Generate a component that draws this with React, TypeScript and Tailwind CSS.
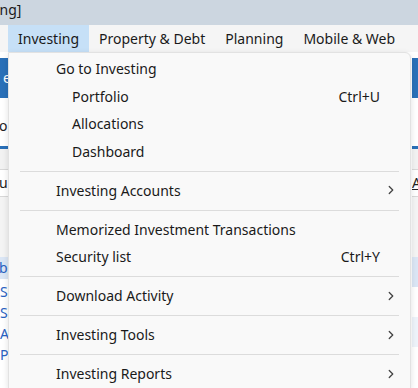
import { ChevronRight } from 'lucide-react'

type Entry =
  | { kind: 'item'; label: string; indent?: boolean; shortcut?: string; sub?: boolean }
  | { kind: 'sep' }

const MENU: Entry[] = [
  { kind: 'item', label: 'Go to Investing' },
  { kind: 'item', label: 'Portfolio', indent: true, shortcut: 'Ctrl+U' },
  { kind: 'item', label: 'Allocations', indent: true },
  { kind: 'item', label: 'Dashboard', indent: true },
  { kind: 'sep' },
  { kind: 'item', label: 'Investing Accounts', sub: true },
  { kind: 'sep' },
  { kind: 'item', label: 'Memorized Investment Transactions' },
  { kind: 'item', label: 'Security list', shortcut: 'Ctrl+Y' },
  { kind: 'sep' },
  { kind: 'item', label: 'Download Activity', sub: true },
  { kind: 'sep' },
  { kind: 'item', label: 'Investing Tools', sub: true },
  { kind: 'sep' },
  { kind: 'item', label: 'Investing Reports', sub: true },
]

const TOP_MENUS = ['Investing', 'Property & Debt', 'Planning', 'Mobile & Web']

function LeftStrip() {
  return (
    <div className="flex w-[8px] flex-col text-[14px] leading-none">
      <div className="h-[6px] bg-white" />
      <div className="flex h-[40px] items-center justify-end overflow-hidden bg-[#2a70b8] text-white">
        <span className="-mr-[3px]">e</span>
      </div>
      <div className="h-[8px] bg-white" />
      <div className="flex h-[40px] items-center overflow-hidden bg-white text-[#222]">
        <span className="-ml-[1px]">o</span>
      </div>
      <div className="h-[3px] bg-[#2a70b8]" />
      <div className="h-[20px] bg-[#f2f2f2]" />
      <div className="flex h-[28px] items-center overflow-hidden border-y border-[#d8d8d8] bg-white text-[#222]">
        <span className="-ml-[1px]">u</span>
      </div>
      <div className="h-[60px] bg-[#f4f4f4]" />
      <div className="flex h-[22px] items-center overflow-hidden bg-[#dbe6f5] text-[#2a62c2]">
        <span className="-ml-[1px]">b</span>
      </div>
      <div className="flex flex-col gap-[6px] bg-white pt-[6px] text-[#2a62c2]">
        <span className="h-[15px] overflow-hidden">S</span>
        <span className="h-[15px] overflow-hidden">S</span>
        <span className="h-[15px] overflow-hidden">A</span>
        <span className="h-[15px] overflow-hidden">PP</span>
      </div>
    </div>
  )
}

function RightStrip() {
  return (
    <div className="flex w-[6px] flex-col text-[14px] leading-none">
      <div className="h-[6px] bg-white" />
      <div className="h-[40px] bg-[#2a70b8]" />
      <div className="h-[48px] bg-white" />
      <div className="h-[3px] bg-[#2a70b8]" />
      <div className="h-[20px] bg-[#f2f2f2]" />
      <div className="flex h-[28px] items-center overflow-hidden border-y border-[#d8d8d8] bg-white text-[#222]">
        <span className="underline">A</span>
      </div>
      <div className="h-[60px] bg-[#f4f4f4]" />
      <div className="h-[30px] bg-[#dbe6f5]" />
      <div className="h-[30px] bg-white" />
      <div className="h-[30px] bg-[#eef3fa]" />
      <div className="flex-1 bg-white" />
    </div>
  )
}

function MenuRow({ entry }: { entry: Extract<Entry, { kind: 'item' }> }) {
  return (
    <div className="flex h-[27.5px] items-center pr-[12px] pl-[47px] whitespace-nowrap">
      <span className={entry.indent ? 'pl-[16px]' : ''}>{entry.label}</span>
      <span className="ml-auto flex items-center">
        {entry.shortcut && <span className="mr-[18px]">{entry.shortcut}</span>}
        {entry.sub && (
          <ChevronRight className="h-[14px] w-[14px] text-[#444]" strokeWidth={2.2} />
        )}
      </span>
    </div>
  )
}

export default function App() {
  return (
    <div
      className="relative h-[388px] w-[418px] overflow-hidden bg-white text-[#1a1a1a]"
      style={{ fontFamily: '"Noto Sans", "Open Sans", sans-serif' }}
    >
      <div className="flex h-[25px] items-center overflow-hidden bg-[#ccd6e0] pb-[6px] text-[14px] whitespace-nowrap">
        <span className="-ml-[4px]">ing]</span>
      </div>

      <nav className="flex h-[27px] bg-[#f5f5f5] text-[14px] whitespace-nowrap">
        {TOP_MENUS.map((m, i) => (
          <div
            key={m}
            className={
              'flex items-center px-[10px] ' +
              (i === 0 ? 'ml-[8px] bg-[#c6e0f7]' : '')
            }
          >
            {m}
          </div>
        ))}
      </nav>

      <div className="flex h-[336px] justify-between">
        <LeftStrip />
        <RightStrip />
      </div>

      <div className="absolute top-[52px] left-[8px] w-[403px] rounded-tr-[6px] border border-[#e2e2e2] bg-[#f9f9f9] pt-[2px] text-[14px] shadow-[0_2px_6px_rgba(0,0,0,0.12)]">
        {MENU.map((entry, i) =>
          entry.kind === 'sep' ? (
            <div key={i} className="mx-[11px] mt-[5.5px] mb-[5px] h-px bg-[#dcdcdc]" />
          ) : (
            <MenuRow key={i} entry={entry} />
          ),
        )}
      </div>
    </div>
  )
}
